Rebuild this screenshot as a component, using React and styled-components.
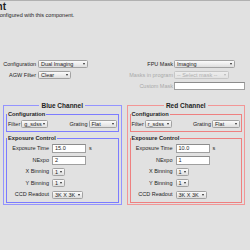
import React from "react";
import styled, { createGlobalStyle } from "styled-components";

const GlobalStyle = createGlobalStyle`
  html, body {
    margin: 0;
    padding: 0;
    background: #e1e1e1;
  }
  body {
    font-family: "Liberation Sans", Arial, sans-serif;
    color: #1e1e1e;
  }
`;

const Page = styled.div`
  width: 250px;
  height: 250px;
  overflow: hidden;
  box-sizing: border-box;
  border-top: 1px solid #b1b1b1;
  background: #e1e1e1;
`;

const Title = styled.h1`
  margin: 0;
  width: 6px;
  display: flex;
  justify-content: flex-end;
  white-space: nowrap;
  font-size: 10px;
  line-height: 11px;
  font-weight: bold;
`;

const Subtitle = styled.p`
  margin: 0 0 0 -3px;
  font-size: 5.5px;
  line-height: 7px;
  white-space: nowrap;
`;

const Settings = styled.div`
  display: flex;
  margin-top: 41px;
`;

const SettingsColumn = styled.div`
  display: grid;
  grid-template-columns: ${(p) => p.$labelWidth}px auto;
  column-gap: ${(p) => p.$gap}px;
  row-gap: 3px;
  align-content: start;
  justify-items: start;
  width: ${(p) => p.$width}px;
`;

const Label = styled.span`
  justify-self: end;
  align-self: center;
  font-size: 5.5px;
  line-height: 7px;
  white-space: nowrap;
  color: ${(p) => (p.$disabled ? "#a9a9a9" : "#1e1e1e")};
`;

const SelectBox = styled.div`
  display: flex;
  align-items: center;
  justify-content: space-between;
  box-sizing: border-box;
  width: ${(p) => p.$width}px;
  height: 8px;
  padding: 0 2px 0 2px;
  border: 1px solid ${(p) => (p.$disabled ? "#c6c6c6" : "#a2a2a2")};
  border-radius: 1.5px;
  background: ${(p) =>
    p.$disabled
      ? "linear-gradient(#ededed, #e2e2e2)"
      : "linear-gradient(#fbfbfb, #dedede)"};
  font-size: 5.5px;
  line-height: 6px;
  white-space: nowrap;
  color: ${(p) => (p.$disabled ? "#b0b0b0" : "#1e1e1e")};
  align-self: center;
`;

const Arrow = styled.span`
  width: 0;
  height: 0;
  border-left: 1.6px solid transparent;
  border-right: 1.6px solid transparent;
  border-top: 2px solid ${(p) => (p.$disabled ? "#b5b5b5" : "#2a2a2a")};
`;

const TextInput = styled.div`
  box-sizing: border-box;
  width: ${(p) => p.$width}px;
  height: ${(p) => p.$height || 9}px;
  padding-left: 2px;
  border: 1px solid #a0a0a0;
  border-top-color: #8c8c8c;
  background: #fff;
  font-size: 5.5px;
  line-height: ${(p) => (p.$height || 9) - 2}px;
  white-space: nowrap;
  align-self: center;
`;

const Channels = styled.div`
  display: flex;
  gap: 5px;
  padding: 0 5px 0 3px;
  margin-top: 11.5px;
`;

const Channel = styled.fieldset`
  flex: 1;
  min-width: 0;
  margin: 0;
  padding: 0 2px 1.5px;
  border: 1px solid ${(p) => p.$line};
`;

const ChannelLegend = styled.legend`
  margin: 0 auto;
  padding: 0 2px;
  font-size: 6.5px;
  line-height: 8px;
  font-weight: bold;
`;

const Group = styled.fieldset`
  margin: ${(p) => p.$top}px 0 0;
  min-width: 0;
  padding: 2.5px 1px;
  border: 1px solid ${(p) => p.$line};
`;

const GroupLegend = styled.legend`
  margin-left: -1px;
  padding: 0 1px;
  font-size: 5.7px;
  line-height: 7px;
  font-weight: bold;
`;

const ConfigRow = styled.div`
  display: flex;
  justify-content: space-between;
  align-items: center;
  height: 8px;
`;

const Pair = styled.div`
  display: flex;
  align-items: center;
  gap: ${(p) => p.$gap}px;
`;

const ExposureGrid = styled.div`
  display: grid;
  grid-template-columns: 41px auto 1fr;
  grid-auto-rows: 9px;
  column-gap: 3px;
  row-gap: 2.5px;
  justify-items: start;
`;

const Unit = styled.span`
  align-self: center;
  font-size: 5.5px;
  line-height: 7px;
`;

const Select = ({ value, width, disabled }) => (
  <SelectBox $width={width} $disabled={disabled}>
    <span>{value}</span>
    <Arrow $disabled={disabled} />
  </SelectBox>
);

const ChannelPanel = ({ name, line, inner, filter, time, nexpo }) => (
  <Channel $line={line}>
    <ChannelLegend>{name}</ChannelLegend>
    <Group $top={1} $line={inner}>
      <GroupLegend>Configuration</GroupLegend>
      <ConfigRow>
        <Pair $gap={1}>
          <Label>Filter</Label>
          <Select value={filter} width={27} />
        </Pair>
        <Pair $gap={1}>
          <Label>Grating</Label>
          <Select value="Flat" width={28} />
        </Pair>
      </ConfigRow>
    </Group>
    <Group $top={3} $line={inner}>
      <GroupLegend>Exposure Control</GroupLegend>
      <ExposureGrid>
        <Label>Exposure Time</Label>
        <TextInput $width={34}>{time}</TextInput>
        <Unit>s</Unit>
        <Label>NExpo</Label>
        <TextInput $width={34}>{nexpo}</TextInput>
        <span />
        <Label>X Binning</Label>
        <Select value="1" width={13} />
        <span />
        <Label>Y Binning</Label>
        <Select value="1" width={13} />
        <span />
        <Label>CCD Readout</Label>
        <Select value="3K X 3K" width={31} />
        <span />
      </ExposureGrid>
    </Group>
  </Channel>
);

export default function App() {
  return (
    <Page>
      <GlobalStyle />
      <Title>Instrument</Title>
      <Subtitle>configured with this component.</Subtitle>

      <Settings>
        <SettingsColumn $width={125} $labelWidth={36} $gap={2}>
          <Label>Configuration</Label>
          <Select value="Dual Imaging" width={50} />
          <Label>AGW Filter</Label>
          <Select value="Clear" width={33} />
        </SettingsColumn>
        <SettingsColumn $width={125} $labelWidth={48} $gap={1}>
          <Label>FPU Mask</Label>
          <Select value="Imaging" width={61} />
          <Label $disabled>Masks in program</Label>
          <Select value="-- Select mask --" width={55} disabled />
          <Label $disabled>Custom Mask</Label>
          <TextInput $width={71} $height={8} />
        </SettingsColumn>
      </Settings>

      <Channels>
        <ChannelPanel
          name="Blue Channel"
          line="#9494ff"
          inner="#7c7cff"
          filter="g_sdss"
          time="15.0"
          nexpo="2"
        />
        <ChannelPanel
          name="Red Channel"
          line="#f29696"
          inner="#ee8080"
          filter="r_sdss"
          time="10.0"
          nexpo="1"
        />
      </Channels>
    </Page>
  );
}
